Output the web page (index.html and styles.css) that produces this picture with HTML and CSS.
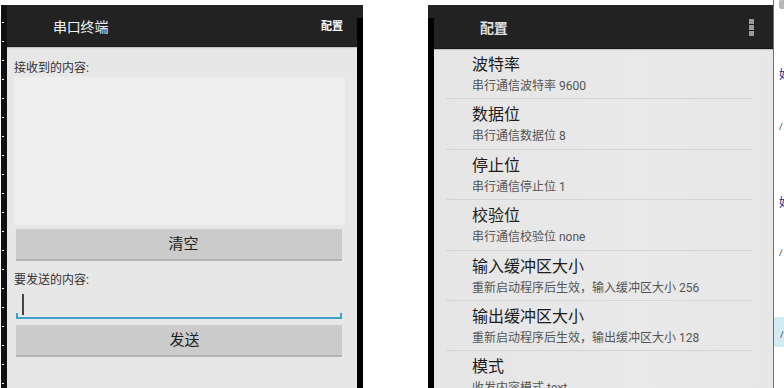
FILE: index.html
```html
<!DOCTYPE html>
<html lang="zh-CN">
<head>
<meta charset="utf-8">
<title>串口终端</title>
<link rel="stylesheet" href="styles.css">
</head>
<body>
<div class="page">
  <div class="ruler"></div>
  <div class="phone">
    <div class="screen">
      <header class="bar">
        <span class="bar-title">串口终端</span>
        <span class="bar-action">配置</span>
      </header>
      <main class="term">
        <div class="label">接收到的内容:</div>
        <div class="recv"></div>
        <button class="btn btn-clear">清空</button>
        <div class="label label-send">要发送的内容:</div>
        <div class="input"><span class="cursor"></span></div>
        <button class="btn btn-send">发送</button>
      </main>
    </div>
    <div class="edge"></div>
  </div>
  <div class="gap"></div>
  <div class="phone">
    <div class="edge"></div>
    <div class="screen screen-prefs">
      <header class="bar bar-prefs">
        <span class="bar-title">配置</span>
        <span class="overflow"><i></i><i></i><i></i></span>
      </header>
      <ul class="prefs">
        <li class="pref"><div class="pref-title">波特率</div><div class="pref-sub">串行通信波特率 9600</div></li>
        <li class="pref"><div class="pref-title">数据位</div><div class="pref-sub">串行通信数据位 8</div></li>
        <li class="pref"><div class="pref-title">停止位</div><div class="pref-sub">串行通信停止位 1</div></li>
        <li class="pref"><div class="pref-title">校验位</div><div class="pref-sub">串行通信校验位 none</div></li>
        <li class="pref"><div class="pref-title">输入缓冲区大小</div><div class="pref-sub">重新启动程序后生效，输入缓冲区大小 256</div></li>
        <li class="pref"><div class="pref-title">输出缓冲区大小</div><div class="pref-sub">重新启动程序后生效，输出缓冲区大小 128</div></li>
        <li class="pref"><div class="pref-title">模式</div><div class="pref-sub">收发内容模式 text</div></li>
      </ul>
    </div>
  </div>
  <div class="divline"></div>
  <div class="strip">
    <span class="strip-top"></span>
    <span class="glyph g1">好</span>
    <span class="glyph g2">/</span>
    <span class="glyph g3">好</span>
    <span class="glyph g4">/</span>
    <span class="strip-hl"><span class="glyph">/</span></span>
  </div>
</div>
</body>
</html>
```

FILE: styles.css
```css
* { box-sizing: border-box; }
html, body { margin: 0; padding: 0; background: #fff; }
body {
  width: 784px;
  height: 388px;
  overflow: hidden;
  font-family: Roboto, "Noto Sans CJK SC", sans-serif;
}
.page {
  display: flex;
  width: 784px;
  height: 388px;
  padding-top: 5px;
}
.ruler {
  width: 7px;
  flex: none;
  background:
    repeating-linear-gradient(to bottom, transparent 0 17px, #fff 17px 18px, transparent 18px 19px) 2px 0 / 2px 100% no-repeat,
    linear-gradient(to right, #fff 0 1px, #111 1px 7px);
}
.phone {
  display: flex;
  flex: none;
  height: 383px;
}
.edge {
  width: 6px;
  flex: none;
  background: linear-gradient(to bottom, #222 0 13px, #000 13px);
}
.gap { width: 65px; flex: none; }
.screen {
  width: 350px;
  display: flex;
  flex-direction: column;
  background: #e7e7e7;
}
.screen-prefs { width: 339px; background: linear-gradient(to right, #e6e6e6, #e9e9e9 60%, #e7e7e7); }

.bar {
  height: 42px;
  flex: none;
  display: flex;
  align-items: center;
  justify-content: space-between;
  background: #222;
  padding: 0 14px 0 46px;
  border-bottom: 1px solid #1a1a1a;
  box-shadow: 0 1px 1px rgba(0,0,0,0.15);
}
.bar-title {
  color: #f2f2f2;
  font-size: 14px;
  letter-spacing: -0.2px;
}
.bar-action {
  color: #fff;
  font-size: 11px;
  font-weight: 700;
  margin-top: -2px;
}
.bar-prefs {
  height: 44px;
  padding: 0 19px 0 46px;
}
.bar-prefs .bar-title { font-weight: 700; color: #e0e0e0; margin-top: 1px; }
.overflow {
  display: flex;
  flex-direction: column;
  gap: 1px;
  margin-top: 1px;
}
.overflow i {
  display: block;
  width: 5px;
  height: 5px;
  background: #9a9a9a;
}

.term {
  flex: 1;
  display: flex;
  flex-direction: column;
  padding-left: 7px;
}
.label {
  margin-top: 13px;
  height: 16px;
  line-height: 16px;
  font-size: 12px;
  color: #333;
}
.label-send { margin-top: 11px; }
.recv {
  height: 148px;
  width: 331px;
  background: #eeeeee;
  margin-top: 1px;
}
.btn {
  display: block;
  margin: 4px 0 0 2px;
  width: 326px;
  height: 32px;
  padding: 0 0 0 9px;
  border: none;
  border-bottom: 2px solid #b3b3b3;
  background: #cbcbcb;
  font-family: inherit;
  font-size: 15px;
  line-height: 30px;
  color: #222;
}
.btn-send { margin-top: 6px; padding-left: 11px; }
.input {
  margin-left: 2px;
  width: 326px;
  height: 31px;
  border-bottom: 2px solid #3ba3c9;
  background:
    linear-gradient(#3ba3c9, #3ba3c9) left bottom / 2px 4px no-repeat,
    linear-gradient(#3ba3c9, #3ba3c9) right bottom / 2px 4px no-repeat;
  padding: 6px 0 0 6px;
}
.cursor {
  display: block;
  width: 2px;
  height: 21px;
  background: #444;
}

.prefs {
  list-style: none;
  margin: 0;
  padding: 0;
}
.pref {
  height: 50.4px;
  margin: 0 21px 0 12px;
  padding: 6px 0 0 26px;
  border-bottom: 1px solid #d3d3d3;
  white-space: nowrap;
}
.pref-title {
  font-size: 16px;
  line-height: 20px;
  color: #1c1c1c;
}
.pref-sub {
  margin-top: 3px;
  font-size: 12px;
  line-height: 16px;
  color: #555;
}

.divline {
  width: 1px;
  flex: none;
  height: 388px;
  margin-top: -5px;
  background: #707070;
}
.strip {
  width: 10px;
  flex: none;
  height: 388px;
  margin-top: -5px;
  overflow: hidden;
  display: flex;
  flex-direction: column;
  align-items: flex-start;
}
.strip-top {
  display: block;
  width: 6px;
  height: 9px;
  margin-left: 5px;
  background: #b8b8b8;
  border-radius: 2px 0 0 2px;
}
.glyph {
  display: block;
  font-size: 12px;
  line-height: 12px;
  color: #1a2a80;
  margin-left: 5px;
}
.g1 { margin-top: 60px; }
.g2 { margin-top: 40px; color: #334; font-size: 9px; }
.g3 { margin-top: 64px; }
.g4 { margin-top: 38px; color: #334; font-size: 9px; }
.strip-hl {
  display: block;
  width: 10px;
  height: 30px;
  margin-top: 58px;
  background: #d3ebf2;
  padding-top: 12px;
}
.strip-hl .glyph { font-size: 9px; margin-left: 6px; color: #334; }
```
